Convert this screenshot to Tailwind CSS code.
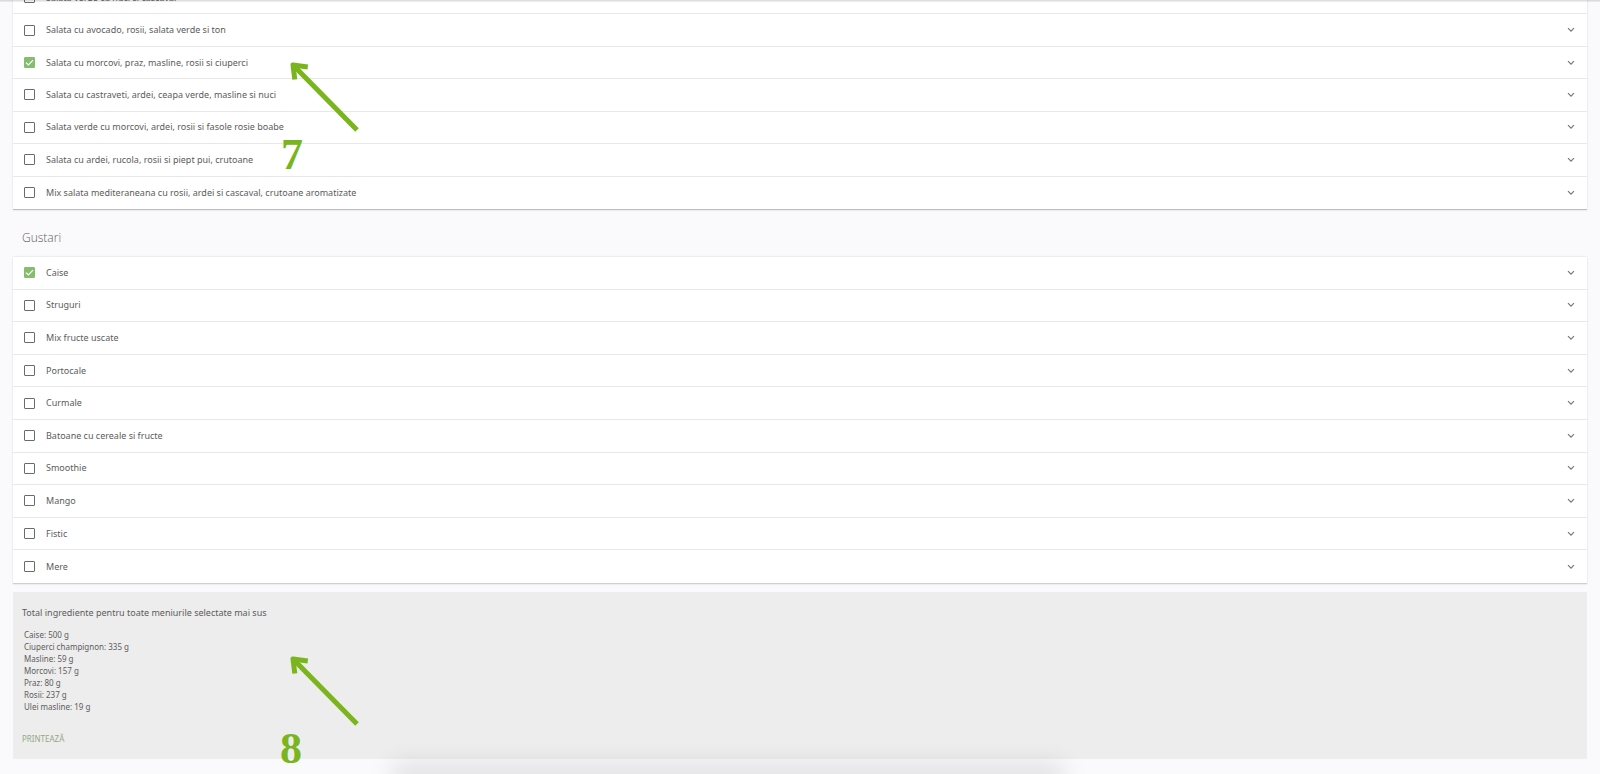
<!DOCTYPE html>
<html lang="ro">
<head>
<meta charset="utf-8">
<meta name="viewport" content="width=device-width, initial-scale=1">
<title>Meniu</title>
<script src="https://cdn.jsdelivr.net/npm/@tailwindcss/browser@4"></script>
</head>
<body class="relative h-screen overflow-hidden bg-[#fafafc] font-['Noto_Sans','Open_Sans',sans-serif] text-[#5c5c5c]">
<main class="-mt-[18px] px-[13px]">
  <ul id="salate" class="grid min-h-[228px] auto-rows-fr border-b border-[#bdbdbd] bg-white shadow-[0_0_2px_rgba(0,0,0,0.15)]"></ul>
  <h2 class="px-[9px] pt-5 pb-[11px] font-['Open_Sans','Noto_Sans',sans-serif] text-xs leading-4 font-light">Gustari</h2>
  <ul id="gustari" class="grid min-h-[327px] auto-rows-fr border-b border-[#d0d0d0] bg-white shadow-[0_0_2px_rgba(0,0,0,0.15)]"></ul>
  <section class="mt-2 bg-[#ededed] px-[9px] pt-[11px] pb-3">
    <h3 class="text-[9px] leading-5">Total ingrediente pentru toate meniurile selectate mai sus</h3>
    <ul class="mt-1.5 pl-0.5 text-[8px] leading-3">
      <li>Caise: 500 g</li><li>Ciuperci champignon: 335 g</li><li>Masline: 59 g</li><li>Morcovi: 157 g</li><li>Praz: 80 g</li><li>Rosii: 237 g</li><li>Ulei masline: 19 g</li>
    </ul>
    <button type="button" class="mt-[18px] block text-[8px] leading-4 text-[#93a886] uppercase">Printează</button>
  </section>
</main>

<!-- Header and footer bar shadows -->
<div class="absolute inset-x-0 top-0 h-0.5 bg-gradient-to-b from-black/15 to-black/5"></div>
<div class="absolute bottom-0 left-1/4 h-0 w-[41%] shadow-[0_0_24px_8px_rgba(0,0,0,0.15)]"></div>

<!-- Step annotations -->
<svg class="absolute top-[60px] left-[288px] h-[74px] w-[74px]" viewBox="0 0 74 74" fill="none" stroke="#7ab51d" stroke-width="5"><path d="M6 6 69 70"/><path stroke-linejoin="round" d="M6.800 19.500 5 5 19.800 7"/></svg>
<span class="absolute top-[133px] left-[281px] font-['Liberation_Serif',serif] text-[44px] leading-[44px] font-bold text-[#7ab51d]">7</span>
<svg class="absolute top-[654px] left-[288px] h-[74px] w-[74px]" viewBox="0 0 74 74" fill="none" stroke="#7ab51d" stroke-width="5"><path d="M6 6 69 70"/><path stroke-linejoin="round" d="M6.800 19.500 5 5 19.800 7"/></svg>
<span class="absolute top-[727px] left-[280px] font-['Liberation_Serif',serif] text-[44px] leading-[44px] font-bold text-[#7ab51d]">8</span>

<template id="row">
  <li class="flex items-center border-b border-[#e8e8e8] pr-3 pl-[11px] last:border-b-0">
    <span class="grid size-[11px] shrink-0">
      <input type="checkbox" class="peer col-start-1 row-start-1 size-[11px] appearance-none rounded-[1px] border border-[#6b6b6b] bg-white checked:border-[#84bd6c] checked:bg-[#84bd6c]">
      <svg viewBox="0 0 11 11" class="pointer-events-none invisible col-start-1 row-start-1 size-[11px] peer-checked:visible" fill="none" stroke="#fff" stroke-width="1.2"><path d="M2 5.6 4.4 8 9 3.2"/></svg>
    </span>
    <label class="grow pl-[11px] text-[9px] leading-4"></label>
    <button type="button" aria-label="Detalii" class="shrink-0"><svg viewBox="0 0 8 6" class="h-1.5 w-2" fill="none" stroke="#777" stroke-width="1.2"><path d="M1 1.2 4 4.2 7 1.2"/></svg></button>
  </li>
</template>
<script>
const lists = {
  salate: ["Salata verde cu nuci si cascaval","Salata cu avocado, rosii, salata verde si ton","*Salata cu morcovi, praz, masline, rosii si ciuperci","Salata cu castraveti, ardei, ceapa verde, masline si nuci","Salata verde cu morcovi, ardei, rosii si fasole rosie boabe","Salata cu ardei, rucola, rosii si piept pui, crutoane","Mix salata mediteraneana cu rosii, ardei si cascaval, crutoane aromatizate"],
  gustari: ["*Caise","Struguri","Mix fructe uscate","Portocale","Curmale","Batoane cu cereale si fructe","Smoothie","Mango","Fistic","Mere"]
};
for (const [id, items] of Object.entries(lists)) items.forEach((t, i) => {
  const row = document.getElementById("row").content.cloneNode(true);
  const input = row.querySelector("input"), label = row.querySelector("label");
  input.id = label.htmlFor = id + i;
  input.checked = t[0] === "*";
  label.textContent = t.replace("*", "");
  document.getElementById(id).append(row);
});
</script>
</body>
</html>
